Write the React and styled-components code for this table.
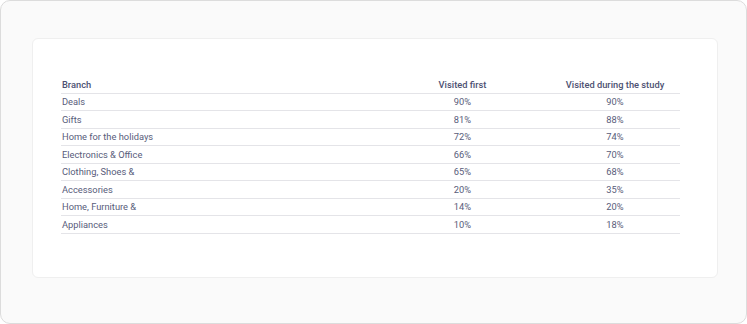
import styled, { createGlobalStyle } from "styled-components";

const GlobalStyle = createGlobalStyle`
  html, body {
    margin: 0;
    padding: 0;
    background: #ffffff;
  }
  body {
    font-family: Roboto, "Liberation Sans", sans-serif;
  }
`;

const rows = [
  { branch: "Deals", first: "90%", during: "90%" },
  { branch: "Gifts", first: "81%", during: "88%" },
  { branch: "Home for the holidays", first: "72%", during: "74%" },
  { branch: "Electronics & Office", first: "66%", during: "70%" },
  { branch: "Clothing, Shoes &", first: "65%", during: "68%" },
  { branch: "Accessories", first: "20%", during: "35%" },
  { branch: "Home, Furniture &", first: "14%", during: "20%" },
  { branch: "Appliances", first: "10%", during: "18%" },
];

export default function App() {
  return (
    <>
      <GlobalStyle />
      <Frame>
        <Card>
          <Table>
            <colgroup>
              <col style={{ width: 314 }} />
              <col style={{ width: 175 }} />
              <col style={{ width: 130 }} />
            </colgroup>
            <thead>
              <tr>
                <HeadCell>Branch</HeadCell>
                <HeadCell center>Visited first</HeadCell>
                <HeadCell center>Visited during the study</HeadCell>
              </tr>
            </thead>
            <tbody>
              {rows.map((r) => (
                <tr key={r.branch}>
                  <Cell>{r.branch}</Cell>
                  <Cell center>{r.first}</Cell>
                  <Cell center>{r.during}</Cell>
                </tr>
              ))}
            </tbody>
          </Table>
        </Card>
      </Frame>
    </>
  );
}

const Frame = styled.div`
  width: 747px;
  height: 324px;
  box-sizing: border-box;
  border: 1px solid #dcdcdc;
  border-radius: 10px;
  background: #fafafa;
  padding: 37px 28px 45px 31px;
`;

const Card = styled.div`
  height: 100%;
  box-sizing: border-box;
  background: #ffffff;
  border: 1px solid #efefef;
  border-radius: 6px;
  padding: 37px 37px 0 28px;
`;

const Table = styled.table`
  width: 619px;
  border-collapse: collapse;
  table-layout: fixed;
`;

const HeadCell = styled.th`
  height: 16.6px;
  padding: 0 1px;
  font-size: 9.3px;
  font-weight: 500;
  color: #4d5172;
  text-align: ${({ center }) => (center ? "center" : "left")};
  border-bottom: 1px solid #e4e4e8;
  white-space: nowrap;
`;

const Cell = styled.td`
  height: 16.5px;
  padding: 0 1px;
  font-size: 9.3px;
  font-weight: 400;
  color: #585c7a;
  text-align: ${({ center }) => (center ? "center" : "left")};
  border-bottom: 1px solid #e4e4e8;
  white-space: nowrap;
`;
